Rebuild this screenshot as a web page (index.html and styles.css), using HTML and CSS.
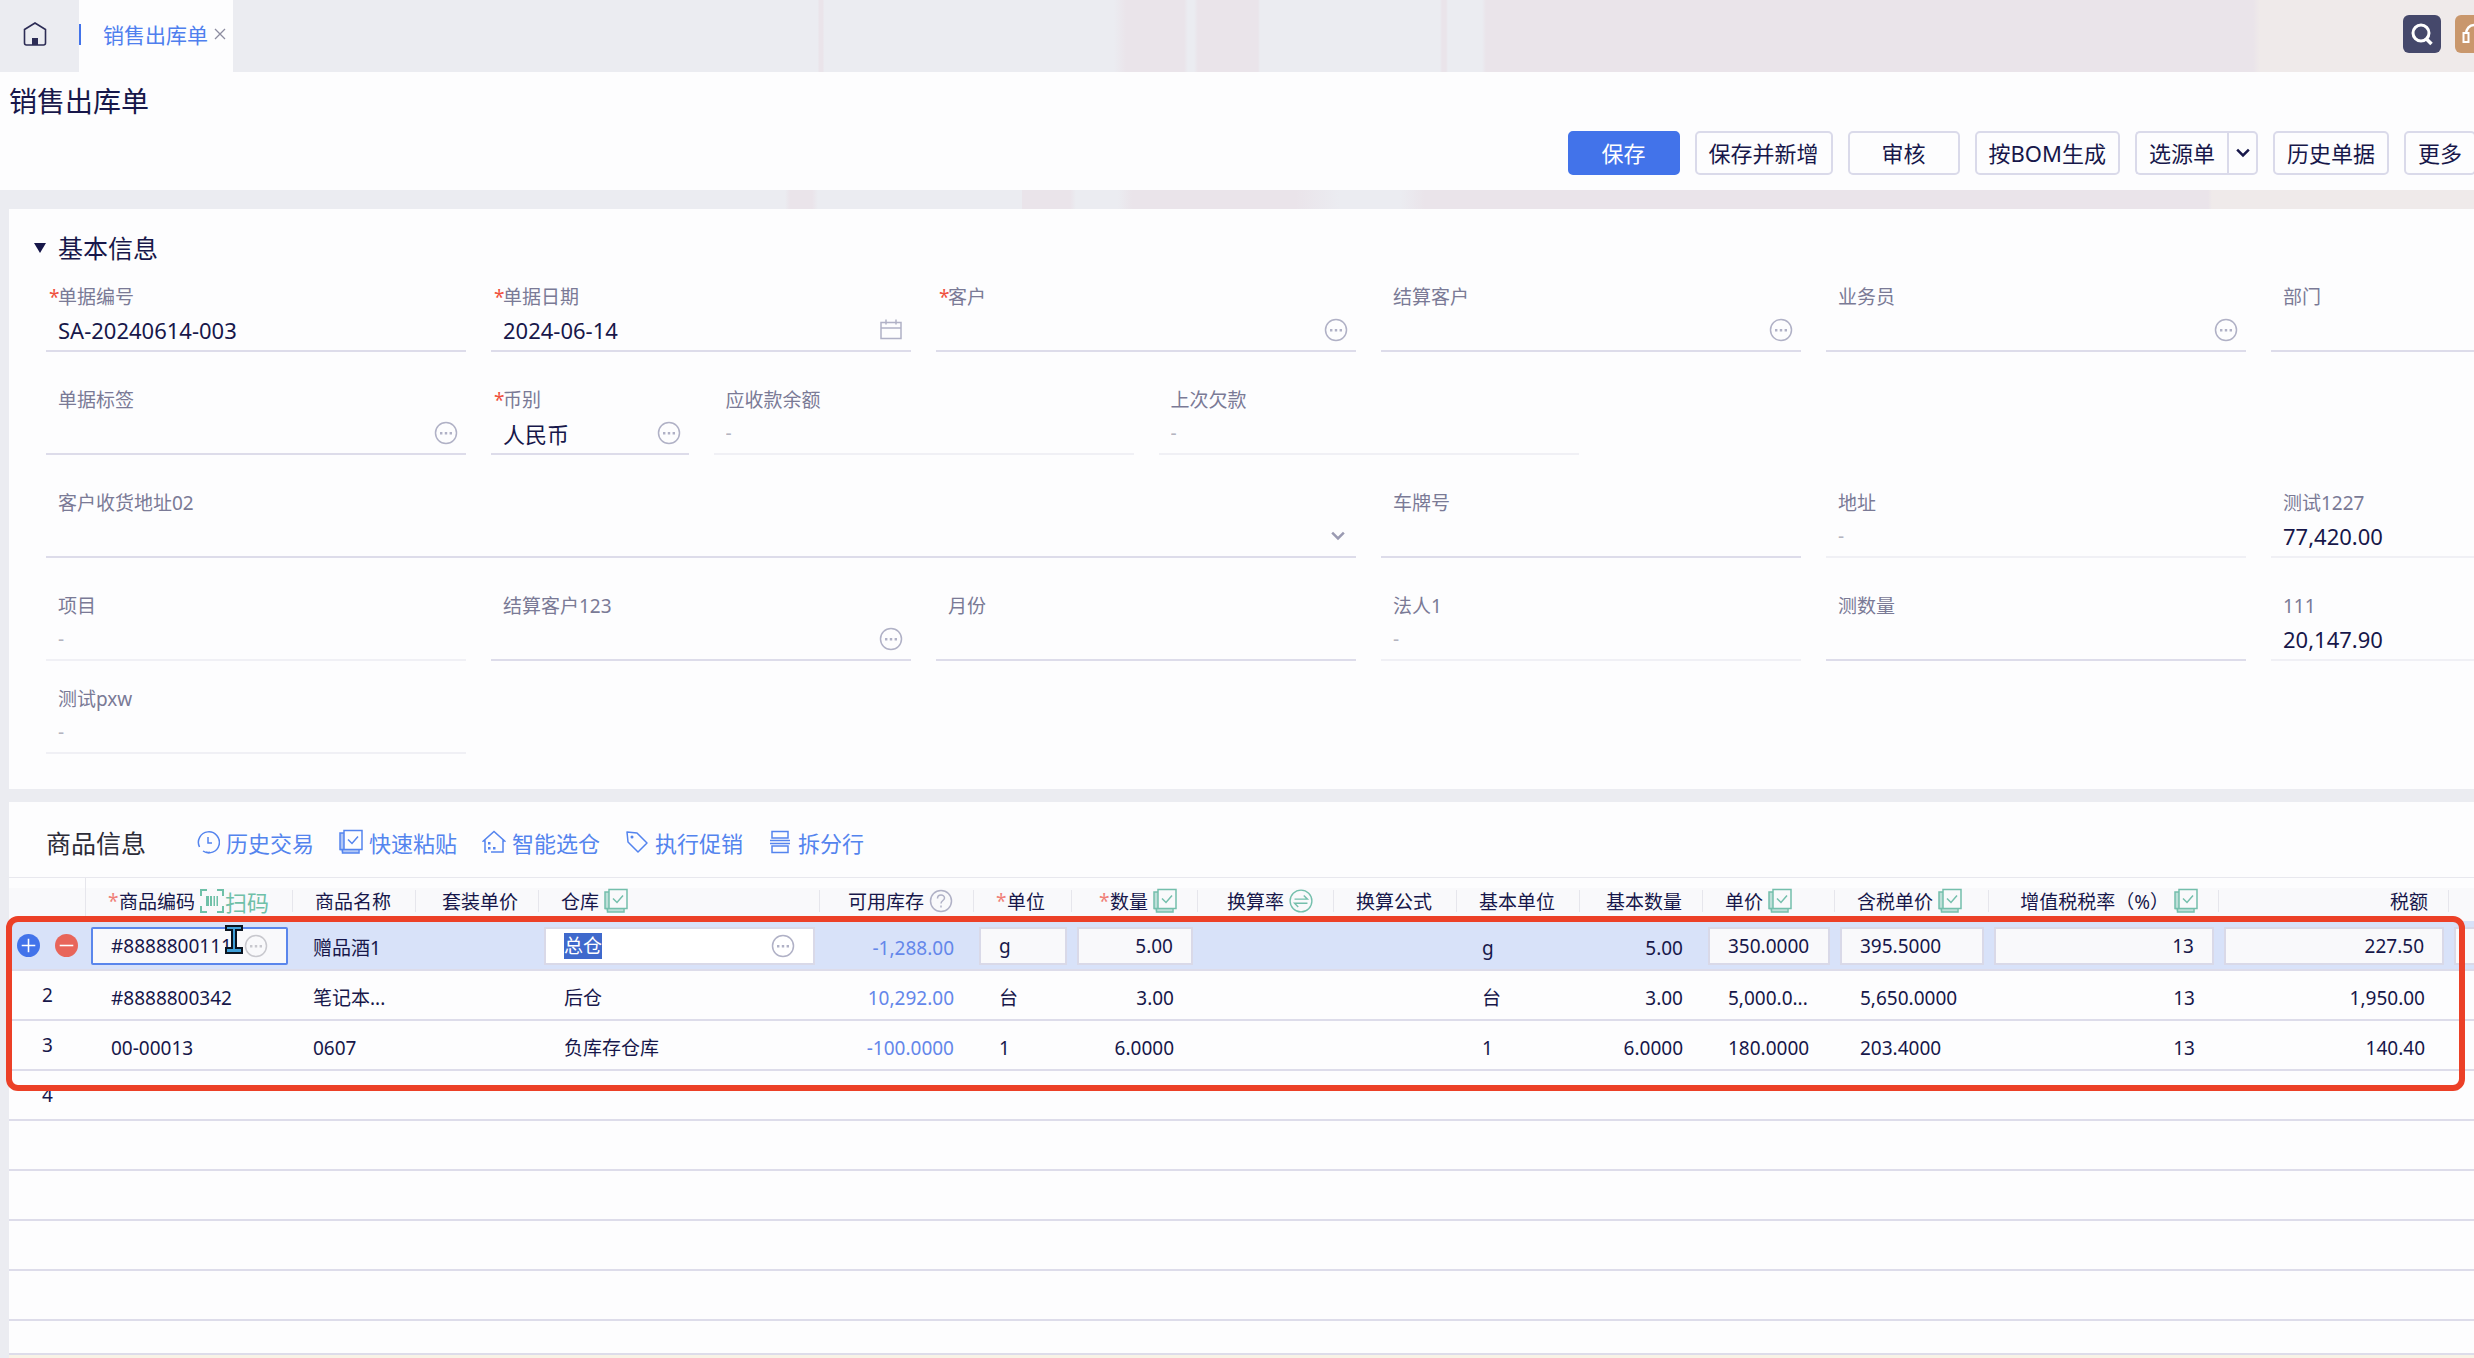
FILE: index.html
```html
<!DOCTYPE html>
<html lang="zh-CN">
<head>
<meta charset="utf-8">
<meta name="viewport" content="width=device-width, initial-scale=1">
<title>销售出库单</title>
<link rel="stylesheet" href="styles.css">
</head>
<body>
<svg class="sprite" aria-hidden="true">
  <symbol id="more" viewBox="0 0 24 24"><circle cx="12" cy="12" r="10.5" fill="none" stroke="currentColor" stroke-width="1.5"/><path d="M6 11h2.4v2.4H6zM10.8 11h2.4v2.4h-2.4zM15.6 11H18v2.4h-2.4z" fill="currentColor"/></symbol>
  <symbol id="calendar" viewBox="0 0 24 24"><path d="M2 4.5h20v16H2zM2 10h20M7 1.5v5M17 1.5v5" fill="none" stroke="currentColor" stroke-width="1.5"/></symbol>
  <symbol id="chevron" viewBox="0 0 24 24"><path d="M5 8l7 7 7-7" fill="none" stroke="currentColor" stroke-width="3"/></symbol>
  <symbol id="batch" viewBox="0 0 24 26"><path d="M1 4h4v16.500h14.500v3.500H4l-3-3z" fill="currentColor" opacity=".45"/><path d="M5 1.5h18v19H5zM5 4H1v16.500l2.500 0v3.500h16.500v-3.500" fill="none" stroke="currentColor" stroke-width="1.5"/><path d="M9 10.500l4 4 6-7" fill="none" stroke="currentColor" stroke-width="1.500"/></symbol>
  <symbol id="swap" viewBox="0 0 26 26"><circle cx="13" cy="13" r="11.800" fill="none" stroke="currentColor" stroke-width="1.500"/><path d="M6 11h14l-4-4M20 15.500H6l4 4" fill="none" stroke="currentColor" stroke-width="1.500"/></symbol>
  <symbol id="help" viewBox="0 0 24 24"><circle cx="12" cy="12" r="10.500" fill="none" stroke="currentColor" stroke-width="1.500"/><path d="M8.500 9.500c0-4.500 7-4.500 7-.5 0 2.500-3.500 2.500-3.500 5.500M12 16.500v2" fill="none" stroke="currentColor" stroke-width="1.500"/></symbol>
</svg>

<header class="topbar">
  <a class="home" href="#" aria-label="首页"><svg viewBox="0 0 24 24"><path d="M1.500 7.500L12 1l10.500 6.500V21q0 2-2 2h-17q-2 0-2-2z" fill="none" stroke="currentColor" stroke-width="1.600"/><path d="M9 16h6v7H9z" fill="currentColor"/></svg></a>
  <div class="tab"><a href="#">销售出库单</a><button class="tab-close" aria-label="关闭"><svg viewBox="0 0 12 12"><path d="M1 1l10 10M11 1L1 11" stroke="currentColor" stroke-width="1.300"/></svg></button></div>
  <div class="tools">
    <button class="tool" aria-label="搜索"><svg viewBox="0 0 24 24"><circle cx="11" cy="11" r="8" fill="none" stroke="currentColor" stroke-width="3"/><path d="M15.500 16l6 6" stroke="currentColor" stroke-width="3.500"/></svg></button>
    <button class="tool gold" aria-label="客服"><svg viewBox="0 0 24 24"><path d="M4 12a8 9 0 0 1 16 0" fill="none" stroke="currentColor" stroke-width="2.500"/><path d="M1.500 11h5v9h-5zM17.500 11h5v9h-5z" fill="none" stroke="currentColor" stroke-width="2"/></svg></button>
  </div>
</header>

<section class="page-head">
  <h1>销售出库单</h1>
  <div class="actions">
    <button class="btn primary">保存</button>
    <button class="btn">保存并新增</button>
    <button class="btn wide">审核</button>
    <button class="btn">按BOM生成</button>
    <span class="split"><button class="btn">选源单</button><button class="btn drop" aria-label="更多源单"><svg><use href="#chevron"/></svg></button></span>
    <button class="btn">历史单据</button>
    <button class="btn">更多</button>
  </div>
</section>

<main class="content">
  <section class="card basic">
    <h2 class="basic-title"><i class="caret"></i>基本信息</h2>
    <div class="fields">
      <div class="field"><label for="f1" class="req">单据编号</label><div class="box"><input id="f1" value="SA-20240614-003"></div></div>
      <div class="field"><label for="f2" class="req">单据日期</label><div class="box"><input id="f2" value="2024-06-14"><svg class="ic"><use href="#calendar"/></svg></div></div>
      <div class="field"><label for="f3" class="req">客户</label><div class="box"><input id="f3"><svg class="ic"><use href="#more"/></svg></div></div>
      <div class="field"><label for="f4">结算客户</label><div class="box"><input id="f4"><svg class="ic"><use href="#more"/></svg></div></div>
      <div class="field"><label for="f5">业务员</label><div class="box"><input id="f5"><svg class="ic"><use href="#more"/></svg></div></div>
      <div class="field"><label for="f6">部门</label><div class="box"><input id="f6"></div></div>

      <div class="field"><label for="f7">单据标签</label><div class="box"><input id="f7"><svg class="ic"><use href="#more"/></svg></div></div>
      <div class="field half"><label for="f8" class="req">币别</label><div class="box"><input id="f8" value="人民币"><svg class="ic"><use href="#more"/></svg></div></div>
      <div class="field ro"><label for="f9">应收款余额</label><div class="box"><input id="f9" value="-" readonly></div></div>
      <div class="field ro"><label for="f10">上次欠款</label><div class="box"><input id="f10" value="-" readonly></div></div>

      <div class="field triple first"><label for="f11">客户收货地址02</label><div class="box"><select id="f11"><option></option></select><svg class="ic chev"><use href="#chevron"/></svg></div></div>
      <div class="field"><label for="f12">车牌号</label><div class="box"><input id="f12"></div></div>
      <div class="field ro"><label for="f13">地址</label><div class="box"><input id="f13" value="-" readonly></div></div>
      <div class="field ro"><label for="f14">测试1227</label><div class="box"><input id="f14" class="strong" value="77,420.00" readonly></div></div>

      <div class="field ro"><label for="f15">项目</label><div class="box"><input id="f15" value="-" readonly></div></div>
      <div class="field"><label for="f16">结算客户123</label><div class="box"><input id="f16"><svg class="ic"><use href="#more"/></svg></div></div>
      <div class="field"><label for="f17">月份</label><div class="box"><input id="f17"></div></div>
      <div class="field ro"><label for="f18">法人1</label><div class="box"><input id="f18" value="-" readonly></div></div>
      <div class="field"><label for="f19">测数量</label><div class="box"><input id="f19"></div></div>
      <div class="field ro"><label for="f20">111</label><div class="box"><input id="f20" class="strong" value="20,147.90" readonly></div></div>
    </div>
    <div class="fields extra">
      <div class="field ro"><label for="f21">测试pxw</label><div class="box"><input id="f21" value="-" readonly></div></div>
    </div>
  </section>

  <section class="card goods">
    <div class="goods-bar">
      <h2>商品信息</h2>
      <nav class="links">
        <a href="#"><svg viewBox="0 0 24 24"><path d="M3.500 17A10.500 10.500 0 1 1 7 21M10 22.300a10.500 10.500 0 0 0 4 0M12 7v6h4" fill="none" stroke="currentColor" stroke-width="1.500"/></svg>历史交易</a>
        <a href="#"><svg><use href="#batch"/></svg>快速粘贴</a>
        <a href="#"><svg viewBox="0 0 24 24"><path d="M5 22H3V11H1.500L12 1.500 22.500 11H21v11H9" fill="none" stroke="currentColor" stroke-width="1.500"/><path d="M6 12h2.500v2.500H6zM6 17h2.500v2.500H6zM11 17h2.500v2.500H11z" fill="currentColor"/></svg>智能选仓</a>
        <a href="#"><svg viewBox="0 0 24 24"><path d="M2 2l10 1 10 10-9 9L3 12z" fill="none" stroke="currentColor" stroke-width="1.500" stroke-linejoin="round"/><circle cx="7" cy="7" r="1.500" fill="currentColor"/></svg>执行促销</a>
        <a href="#"><svg viewBox="0 0 24 24"><path d="M4 1.500h16V8H4zM4 16h16v6.500H4zM2 10.500h20M2 13.500h20" fill="none" stroke="currentColor" stroke-width="1.500"/></svg>拆分行</a>
      </nav>
    </div>

    <table class="grid">
      <colgroup><col class="w77"><col class="w207"><col class="w123"><col class="w123"><col class="w281"><col class="w154"><col class="w98"><col class="w126"><col class="w136"><col class="w123"><col class="w123"><col class="w123"><col class="w132"><col class="w154"><col class="w230"><col class="w230"><col></colgroup>
      <thead>
        <tr>
          <th class="idx"></th>
          <th><div><span class="star">*</span>商品编码<a class="scan" href="#"><svg viewBox="0 0 24 24"><path d="M1 7V1h6M17 1h6v6M23 17v6h-6M7 23H1v-6" fill="none" stroke="currentColor" stroke-width="2"/><path d="M6 7h3v10H6zM10 7h2v10h-2zM13.500 7H15v10h-1.500zM16.500 7H18v10h-1.500z" fill="currentColor"/></svg>扫码</a></div></th>
          <th><div>商品名称</div></th>
          <th class="r"><div>套装单价</div></th>
          <th><div>仓库<svg class="hi"><use href="#batch"/></svg></div></th>
          <th class="r"><div>可用库存<svg class="hi gray"><use href="#help"/></svg></div></th>
          <th><div><span class="star">*</span>单位</div></th>
          <th class="r"><div><span class="star">*</span>数量<svg class="hi"><use href="#batch"/></svg></div></th>
          <th class="r"><div>换算率<svg class="hi"><use href="#swap"/></svg></div></th>
          <th><div>换算公式</div></th>
          <th><div>基本单位</div></th>
          <th class="r"><div>基本数量</div></th>
          <th><div>单价<svg class="hi"><use href="#batch"/></svg></div></th>
          <th><div>含税单价<svg class="hi"><use href="#batch"/></svg></div></th>
          <th class="r"><div>增值税税率（%）<svg class="hi"><use href="#batch"/></svg></div></th>
          <th class="r"><div>税额</div></th>
          <th></th>
        </tr>
      </thead>
      <tbody>
        <tr class="active">
          <td class="idx"><div class="rowops"><button class="op add" aria-label="新增行"><svg viewBox="0 0 22 22"><path d="M4.500 11h13M11 4.500v13" stroke="currentColor" stroke-width="1.500"/></svg></button><button class="op del" aria-label="删除行"><svg viewBox="0 0 22 22"><path d="M4.500 11h13" stroke="currentColor" stroke-width="1.500"/></svg></button></div></td>
          <td class="ed"><div class="cell focus"><input aria-label="商品编码" value="#8888800111"><svg class="ic"><use href="#more"/></svg></div></td>
          <td>赠品酒1</td>
          <td></td>
          <td class="ed"><div class="cell white"><input aria-label="仓库" class="picked" value="总仓"><svg class="ic"><use href="#more"/></svg></div></td>
          <td class="r stock">-1,288.00</td>
          <td class="ed"><div class="cell"><input aria-label="单位" value="g"></div></td>
          <td class="ed r"><div class="cell"><input aria-label="数量" value="5.00"></div></td>
          <td></td>
          <td></td>
          <td class="wide-pad">g</td>
          <td class="r">5.00</td>
          <td class="ed"><div class="cell"><input aria-label="单价" value="350.0000"></div></td>
          <td class="ed"><div class="cell"><input aria-label="含税单价" value="395.5000"></div></td>
          <td class="ed r"><div class="cell"><input aria-label="增值税税率" value="13"></div></td>
          <td class="ed r"><div class="cell"><input aria-label="税额" value="227.50"></div></td>
          <td class="ed"><div class="cell"></div></td>
        </tr>
        <tr>
          <td class="idx">2</td><td class="wide-pad">#8888800342</td><td>笔记本...</td><td></td><td class="wide-pad">后仓</td><td class="r stock">10,292.00</td><td class="wide-pad">台</td><td class="r wide-pad">3.00</td><td></td><td></td><td class="wide-pad">台</td><td class="r">3.00</td><td class="wide-pad">5,000.0...</td><td class="wide-pad">5,650.0000</td><td class="r wide-pad">13</td><td class="r wide-pad">1,950.00</td><td></td>
        </tr>
        <tr>
          <td class="idx">3</td><td class="wide-pad">00-00013</td><td>0607</td><td></td><td class="wide-pad">负库存仓库</td><td class="r stock">-100.0000</td><td class="wide-pad">1</td><td class="r wide-pad">6.0000</td><td></td><td></td><td class="wide-pad">1</td><td class="r">6.0000</td><td class="wide-pad">180.0000</td><td class="wide-pad">203.4000</td><td class="r wide-pad">13</td><td class="r wide-pad">140.40</td><td></td>
        </tr>
        <tr><td class="idx">4</td><td colspan="16"></td></tr>
        <tr><td colspan="17"></td></tr>
        <tr><td colspan="17"></td></tr>
        <tr><td colspan="17"></td></tr>
        <tr><td colspan="17"></td></tr>
        <tr class="short"><td colspan="17"></td></tr>
      </tbody>
    </table>
    <div class="sum"></div>
    <div class="highlight"></div>
    <svg class="ibeam" viewBox="0 0 18 29"><path d="M1 1h16v4h-6v18h6v5H1v-5h6V5H1z" fill="#3f9fd8" stroke="#0b1420" stroke-width="2"/></svg>
  </section>
</main>
<script src="app.js"></script>
</body>
</html>
```

FILE: styles.css
```css
* { box-sizing: border-box; }

:root {
  --ink: #17174a;
  --muted: #7a7a96;
  --blue: #4273ea;
  --line: #dddcea;
  --paper: #fdfdfe;
  --mist: #ebecf1;
  --rose: #eae4ea;
  --sand: #efeaea;
}

body {
  margin: 0;
  min-height: 100vh;
  display: flex;
  flex-direction: column;
  overflow: hidden;
  font-family: "Noto Sans", "Noto Sans CJK SC", sans-serif;
  font-size: 19px;
  color: var(--ink);
  background: linear-gradient(to right, var(--mist) 0 785px, var(--rose) 790px 812px, var(--mist) 818px 1022px, var(--rose) 1022px 1070px, var(--mist) 1076px 1118px, var(--rose) 1132px 1295px, var(--mist) 1340px 1400px, var(--rose) 1425px 2208px, var(--sand) 2212px) 0 0 / 100% 209px no-repeat var(--mist);
}

button, input, select { font: inherit; color: inherit; margin: 0; }
button { cursor: pointer; }
h1, h2 { margin: 0; font-weight: 400; }
a { text-decoration: none; }
.sprite { position: absolute; width: 0; height: 0; }

.topbar {
  display: flex;
  height: 72px;
  background: linear-gradient(to right, var(--mist) 0 818px, var(--rose) 819px 823px, var(--mist) 824px 1114px, var(--rose) 1126px 1184px, var(--mist) 1188px 1194px, var(--rose) 1198px 1258px, var(--mist) 1260px 1440px, var(--rose) 1442px 1446px, var(--mist) 1448px 1482px, var(--rose) 1486px 2253px, var(--sand) 2260px);
}
.home { width: 79px; padding: 22px 0 0 23px; color: #2c2c55; }
.home svg { width: 24px; height: 24px; display: block; }
.tab {
  display: flex;
  align-items: center;
  gap: 6px;
  width: 154px;
  padding: 0 6px 4px 24px;
  background: linear-gradient(var(--blue), var(--blue)) 0 24px / 2px 21px no-repeat var(--paper);
}
.tab a { font-size: 21px; color: #4f7fee; white-space: nowrap; }
.tab-close { border: 0; padding: 0; background: none; color: #8c8ca0; height: 12px; display: flex; }
.tab-close svg { width: 12px; height: 12px; }
.tools { display: flex; gap: 14px; margin: 15px -19px 0 auto; }
.tool {
  width: 38px;
  height: 38px;
  padding: 7px;
  border: 0;
  border-radius: 6px;
  background: #45486b;
  color: #fff;
}
.tool svg { width: 24px; height: 24px; display: block; }
.tool.gold { background: #c9976c; }

.page-head { height: 118px; background: var(--paper); }
.page-head h1 { padding: 8px 9px 0; font-size: 28px; line-height: 42px; }
.actions { display: flex; justify-content: flex-end; gap: 15px; margin: 9px -2px 0 0; }
.btn {
  height: 44px;
  padding: 0 12px;
  border: 2px solid #dadaea;
  border-radius: 5px;
  background: var(--paper);
  font-size: 22px;
  line-height: 40px;
  white-space: nowrap;
}
.btn.wide { width: 112px; }
.btn.primary { width: 112px; background: var(--blue); border-color: var(--blue); color: #fff; }
.split { display: flex; }
.split .btn:first-child { border-right: 0; border-radius: 5px 0 0 5px; }
.btn.drop { width: 31px; padding: 0 4px; border-radius: 0 5px 5px 0; }
.btn.drop svg { width: 20px; height: 20px; display: block; }

.content { flex: 1; display: flex; flex-direction: column; gap: 13px; padding: 19px 0 0 9px; }
.card { background: var(--paper); }

.basic { padding: 20px 0 35px 37px; overflow: hidden; }
.basic-title { display: flex; align-items: center; font-size: 25px; line-height: 38px; height: 38px; margin-left: -12px; }
.caret { border: 6px solid transparent; border-top: 10px solid var(--ink); border-bottom: 0; margin-right: 12px; }
.fields {
  display: grid;
  grid-template-columns: repeat(12, 1fr);
  gap: 36px 25px;
  width: calc(100% + 217px);
  margin-top: 18px;
}
.fields.extra { margin-top: 26px; }
.field { grid-column: span 2; min-width: 0; }
.field.half { grid-column: span 1; }
.field.triple { grid-column: span 6; }
.field.first { grid-column: 1 / span 6; }
.field label { display: block; padding-left: 12px; line-height: 24px; font-size: 19px; color: var(--muted); }
.field label.req { padding-left: 3px; }
.field label.req::before { content: "*"; display: inline-block; width: 9px; color: #f0503c; }
.box { display: flex; align-items: center; height: 43px; padding: 0 8px 0 12px; border-bottom: 2px solid var(--line); }
.ro .box { border-bottom-color: #f0f0f5; }
.box input, .box select { flex: 1; min-width: 0; width: 0; height: 32px; padding: 0; border: 0; outline: 0; background: none; font-size: 22px; appearance: none; }
.ro input { color: #b4b4c0; font-size: 19px; }
.ro input.strong { color: var(--ink); font-size: 22px; }
.ic { flex: none; width: 24px; height: 24px; color: #b0b1c6; }
.chev { width: 20px; height: 20px; color: #9a9ab2; }

.goods { position: relative; flex: 1; display: flex; flex-direction: column; }
.goods-bar { display: flex; align-items: center; height: 75px; padding: 4px 0 0 37px; }
.goods-bar h2 { font-size: 25px; color: #2c2c38; width: 150px; }
.links { display: flex; gap: 25px; }
.links a { display: flex; align-items: center; gap: 6px; font-size: 22px; color: #5484ee; white-space: nowrap; }
.links svg { width: 24px; height: 26px; }

.grid { width: 100%; table-layout: fixed; border-collapse: separate; border-spacing: 0; border-top: 1px solid #e8e8ee; }
.w77 { width: 77px; }
.w98 { width: 98px; }
.w123 { width: 123px; }
.w126 { width: 126px; }
.w132 { width: 132px; }
.w136 { width: 136px; }
.w154 { width: 154px; }
.w207 { width: 207px; }
.w230 { width: 230px; }
.w281 { width: 281px; }
.grid th {
  height: 43px;
  padding: 2px 0 0;
  font-weight: 400;
  text-align: left;
  background: linear-gradient(var(--paper) 10px, #f9f9fb 10px);
}
.grid th div { display: flex; align-items: center; height: 22px; padding: 0 20px 0 22px; border-right: 1px solid #e6e6ec; white-space: nowrap; }
.grid th.r div { justify-content: flex-end; }
.grid th.idx { border-right: 1px solid #e6e6ec; }
.star { width: 11px; color: #f08078; flex: none; }
.hi { width: 24px; height: 26px; margin-left: 5px; color: #74bfac; flex: none; }
.hi.gray { color: #b0b1c6; }
.scan { display: flex; align-items: center; gap: 1px; margin-left: 5px; font-size: 22px; color: #6fc0a8; }
.scan svg { width: 24px; height: 24px; }

.grid td {
  height: 50px;
  padding: 6px 20px 0;
  border-bottom: 2px solid var(--line);
  overflow: hidden;
  white-space: nowrap;
  line-height: 26px;
}
.grid td.wide-pad { padding-left: 25px; padding-right: 24px; }
.grid td.r { text-align: right; }
.grid td.idx { padding: 0; text-align: center; }
.grid .stock { color: #6487ea; }
.active td { background: #d8e2f9; }
.grid .active td.idx { padding: 0 0 0 8px; }
.grid td.ed { padding: 2px 5px 0; }
.grid .short td { height: 34px; padding: 0; }
.rowops { display: flex; gap: 15px; }
.op { width: 23px; height: 23px; padding: 0; border: 0; border-radius: 50%; color: #fff; }
.op svg { width: 23px; height: 23px; display: block; }
.op.add { background: var(--blue); }
.op.del { background: #e8655a; }
.cell { display: flex; align-items: center; height: 38px; padding: 0 18px; border: 2px solid #d9d9e8; background: #f9f9fb; }
.cell input { flex: 1; width: 0; min-width: 0; height: 26px; padding: 0; border: 0; outline: 0; background: none; }
.r .cell input { text-align: right; }
.cell.focus { border-color: #5a86ec; border-radius: 2px; }
.cell.focus .ic { color: #c8c8ce; }
.cell.white { background: #fff; }
.picked::selection { background: #3f69cc; color: #fff; }

.sum { flex: 1; min-height: 3px; background: #f8f3e6; }
.highlight { position: absolute; inset: 114px 9px auto -3px; height: 175px; border: 6px solid #ec4027; border-radius: 12px; pointer-events: none; }
.ibeam { position: absolute; left: 216px; top: 123px; width: 18px; height: 29px; pointer-events: none; }
```

FILE: app.js
```js
// Start with the warehouse of the first line ready to be replaced.
const picked = document.querySelector('.picked');
picked.focus();
picked.select();
```
